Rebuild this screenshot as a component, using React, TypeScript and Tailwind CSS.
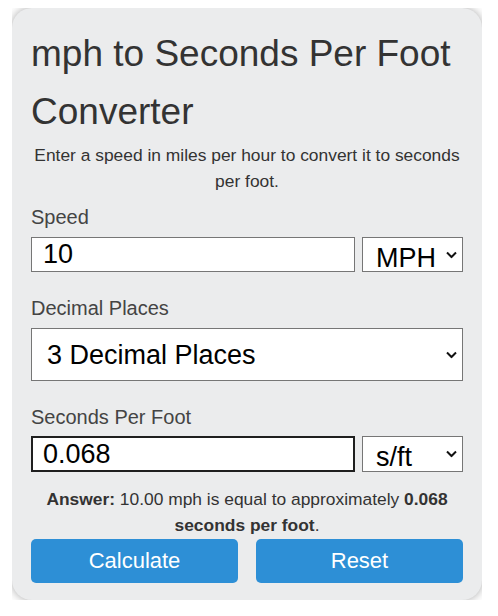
import React, { useState } from 'react'

const Chevron = () => (
  <svg
    className="pointer-events-none absolute right-[6px] top-1/2 -translate-y-1/2"
    width="11"
    height="7"
    viewBox="0 0 11 7"
    fill="none"
  >
    <path d="M1 1l4.5 4.5L10 1" stroke="#111" strokeWidth="2" />
  </svg>
)

type SelectProps = {
  value: string
  options: string[]
  className: string
  onChange?: (v: string) => void
}

const Select = (props: SelectProps) => (
  <div className={'relative ' + props.className}>
    <select
      value={props.value}
      onChange={(e) => props.onChange?.(e.target.value)}
      className="h-full w-full appearance-none border border-[#767676] bg-white text-[27px] text-black outline-none"
      style={{ paddingLeft: props.options.length > 3 ? 15 : 13 }}
    >
      {props.options.map((o) => (
        <option key={o}>{o}</option>
      ))}
    </select>
    <Chevron />
  </div>
)

const App = () => {
  const [speed, setSpeed] = useState('10')
  const [places, setPlaces] = useState('3 Decimal Places')
  const digits = parseInt(places) || 3
  const mph = parseFloat(speed) || 0
  const result = mph > 0 ? (3600 / (mph * 5280)).toFixed(digits) : ''

  return (
    <div className="min-h-screen bg-white font-['Liberation_Sans',Arial,sans-serif]">
      <div className="ml-[12px] pt-[8px]">
        <div className="h-[592px] w-[470px] overflow-hidden">
          <div className="flex h-full flex-col rounded-[20px] bg-[#ebeced] px-[19px] pt-[17px] shadow-[0_0_10px_rgba(0,0,0,0.35)]">
            <h1 className="text-[37px] leading-[57.6px] text-[#333]">mph to Seconds Per Foot Converter</h1>
            <p className="mt-[3px] text-center text-[17.4px] leading-[25.6px] text-[#333]">
              Enter a speed in miles per hour to convert it to seconds per foot.
            </p>

            <label className="mt-[7px] text-[20px] leading-[32px] text-[#444]">Speed</label>
            <div className="mt-[4px] flex h-[35px] gap-[7px]">
              <input
                value={speed}
                onChange={(e) => setSpeed(e.target.value)}
                className="h-full min-w-0 flex-1 border border-[#767676] bg-white px-[11px] text-[27px] text-black outline-none"
              />
              <Select value="MPH" options={['MPH', 'km/h', 'm/s']} className="h-full w-[101px]" />
            </div>

            <label className="mt-[20px] text-[20px] leading-[32px] text-[#444]">Decimal Places</label>
            <Select
              value={places}
              onChange={setPlaces}
              options={['0 Decimal Places', '1 Decimal Place', '2 Decimal Places', '3 Decimal Places', '4 Decimal Places']}
              className="mt-[4px] h-[53px] w-full"
            />

            <label className="mt-[20px] text-[20px] leading-[32px] text-[#444]">Seconds Per Foot</label>
            <div className="mt-[3px] flex h-[36px] gap-[7px]">
              <input
                value={result}
                readOnly
                className="h-full min-w-0 flex-1 border-2 border-[#1f1f1f] bg-white px-[10px] text-[27px] text-black outline-none"
              />
              <Select value="s/ft" options={['s/ft', 's/m']} className="h-full w-[101px]" />
            </div>

            <p className="mt-[15px] text-center text-[17.4px] leading-[25.6px] text-[#333]">
              <b>Answer:</b> {mph.toFixed(2)} mph is equal to approximately <b>{result}</b>{' '}
              <b>seconds per foot</b>.
            </p>

            <div className="flex gap-[18px]">
              <button className="h-[44px] flex-1 rounded-[5px] bg-[#2d8fd6] text-[22px] text-white">Calculate</button>
              <button onClick={() => setSpeed('')} className="h-[44px] flex-1 rounded-[5px] bg-[#2d8fd6] text-[22px] text-white">
                Reset
              </button>
            </div>
          </div>
        </div>
      </div>
    </div>
  )
}

export default App
